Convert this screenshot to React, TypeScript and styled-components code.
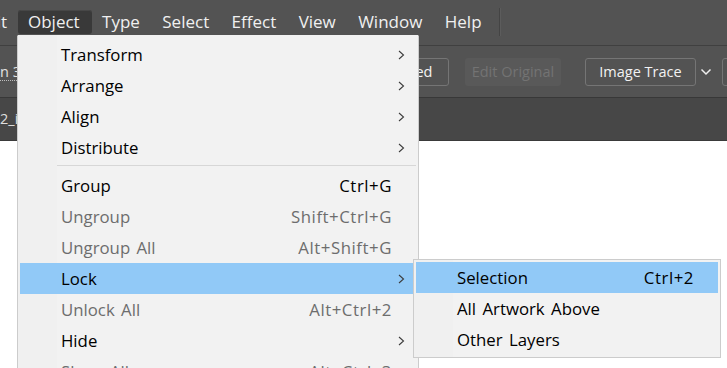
import styled, { createGlobalStyle } from "styled-components";

const GlobalStyle = createGlobalStyle`
  html, body {
    margin: 0;
    padding: 0;
    background: #ffffff;
  }
  body {
    font-family: "Open Sans", "Noto Sans", sans-serif;
  }
`;

// pantalla completa
const Screen = styled.div`
  position: relative;
  width: 727px;
  height: 368px;
  overflow: hidden;
  display: flex;
  flex-direction: column;
  background: #ffffff;
`;

const MenuBar = styled.div`
  height: 46px;
  box-sizing: border-box;
  padding-top: 10px;
  display: flex;
  align-items: flex-start;
  background: #535353;
  border-bottom: 1px solid #404040;
`;

type BarItemProps = {
  $active?: boolean;
  $clipped?: boolean;
};

const BarItem = styled.div<BarItemProps>`
  height: 24px;
  line-height: 23px;
  padding: 0 12.4px 0 10px;
  font-size: 17px;
  color: #f0f0f0;
  white-space: nowrap;
  border-radius: 3px;
  background: ${(props) => (props.$active ? "#393939" : "transparent")};
  box-shadow: ${(props) => (props.$active ? "inset 0 1px 0 #474747" : "none")};
  ${(props) =>
    props.$clipped &&
    `
    width: 18px;
    padding: 0 11px 0 0;
    display: flex;
    justify-content: flex-end;
    overflow: hidden;
    box-sizing: border-box;
  `}
`;

const BarDivider = styled.div`
  width: 1px;
  height: 28px;
  margin: -2px 0 0 5px;
  background: #444444;
  box-shadow: 1px 0 0 #5c5c5c;
`;

const Toolbar = styled.div`
  height: 52px;
  box-sizing: border-box;
  display: flex;
  align-items: center;
  background: #535353;
  border-bottom: 1px solid #383838;
  font-size: 14.5px;
`;

const DottedLabel = styled.span`
  color: #e2e2e2;
  white-space: nowrap;
  border-bottom: 1px dotted #bdbdbd;
  line-height: 17px;
`;

type ToolButtonProps = {
  $w: number;
  $gap: number;
  $disabled?: boolean;
};

const ToolButton = styled.div<ToolButtonProps>`
  flex: none;
  width: ${(props) => props.$w}px;
  height: 28px;
  margin-left: ${(props) => props.$gap}px;
  box-sizing: border-box;
  display: flex;
  align-items: center;
  justify-content: center;
  border-radius: 3px;
  white-space: nowrap;
  border: 1px solid ${(props) => (props.$disabled ? "transparent" : "#757575")};
  background: ${(props) => (props.$disabled ? "#595959" : "transparent")};
  color: ${(props) => (props.$disabled ? "#737373" : "#f2f2f2")};
`;

const Caret = styled.div`
  flex: none;
  width: 16px;
  margin-left: 2px;
  display: flex;
  justify-content: center;
`;

const TabBar = styled.div`
  height: 43px;
  box-sizing: border-box;
  display: flex;
  align-items: center;
  background: #474747;
  border-bottom: 1px solid #3a3a3a;
`;

const TabTitle = styled.span`
  color: #dedede;
  font-size: 14.5px;
  white-space: nowrap;
  padding-bottom: 2px;
`;

const Canvas = styled.div`
  flex: 1;
  background: #ffffff;
`;

type PopupProps = {
  $left: number;
  $top: number;
  $width: number;
  $open?: boolean;
};

// los menús desplegables van encima de todo
const Popup = styled.div<PopupProps>`
  position: absolute;
  left: ${(props) => props.$left}px;
  top: ${(props) => props.$top}px;
  width: ${(props) => props.$width}px;
  box-sizing: border-box;
  padding: ${(props) => (props.$open ? "3px 2px 2px" : "2px")};
  border: 1px solid #cccccc;
  border-top-color: ${(props) => (props.$open ? "transparent" : "#cccccc")};
  background: linear-gradient(to right, #f0f0f0 39px, #f2f2f2 39px);
  font-size: 16.8px;
  word-spacing: 2px;
`;

type RowProps = {
  $hover?: boolean;
  $disabled?: boolean;
};

const Row = styled.div<RowProps>`
  height: 31px;
  display: grid;
  grid-template-columns: 1fr auto 24px;
  align-items: center;
  padding-left: 41px;
  white-space: nowrap;
  background: ${(props) => (props.$hover ? "#91c9f7" : "transparent")};
  color: ${(props) => (props.$disabled ? "#6d6d6d" : "#000000")};
`;

const Shortcut = styled.span`
  text-align: right;
  letter-spacing: 0.55px;
`;

const Arrow = styled.span`
  display: flex;
  padding-left: 6px;
`;

const Separator = styled.div`
  height: 1px;
  margin: 2px 0 4px 37px;
  background: #d7d7d7;
`;

type Item = {
  label: string;
  keys?: string;
  sub?: boolean;
  off?: boolean;
  hover?: boolean;
};

const firstGroup: Item[] = [
  { label: "Transform", sub: true },
  { label: "Arrange", sub: true },
  { label: "Align", sub: true },
  { label: "Distribute", sub: true },
];

const secondGroup: Item[] = [
  { label: "Group", keys: "Ctrl+G" },
  { label: "Ungroup", keys: "Shift+Ctrl+G", off: true },
  { label: "Ungroup All", keys: "Alt+Shift+G", off: true },
  { label: "Lock", sub: true, hover: true },
  { label: "Unlock All", keys: "Alt+Ctrl+2", off: true },
  { label: "Hide", sub: true },
  { label: "Show All", keys: "Alt+Ctrl+3", off: true },
];

const lockItems: Item[] = [
  { label: "Selection", keys: "Ctrl+2", hover: true },
  { label: "All Artwork Above" },
  { label: "Other Layers" },
];

function Chevron() {
  return (
    <svg width="7" height="10" viewBox="0 0 7 10">
      <polyline points="1,1 5.5,5 1,9" fill="none" stroke="#3c3c3c" strokeWidth="1.1" />
    </svg>
  );
}

function MenuRow({ item }: { item: Item }) {
  return (
    <Row $hover={item.hover} $disabled={item.off}>
      <span>{item.label}</span>
      <Shortcut>{item.keys}</Shortcut>
      <Arrow>{item.sub && <Chevron />}</Arrow>
    </Row>
  );
}

function App() {
  const barItems = ["Object", "Type", "Select", "Effect", "View", "Window", "Help"];

  return (
    <>
      <GlobalStyle />
      <Screen>
        <MenuBar>
          <BarItem $clipped>Edit</BarItem>
          {barItems.map((name) => (
            <BarItem key={name} $active={name === "Object"}>
              {name}
            </BarItem>
          ))}
          <BarDivider />
        </MenuBar>

        <Toolbar>
          <DottedLabel>n 3</DottedLabel>
          <ToolButton $w={100} $gap={328}>Unembed</ToolButton>
          <ToolButton $w={96} $gap={16} $disabled>
            Edit Original
          </ToolButton>
          <ToolButton $w={111} $gap={24}>Image Trace</ToolButton>
          <Caret>
            <svg width="12" height="8" viewBox="0 0 12 8">
              <polyline points="1.5,1.5 6,6 10.5,1.5" fill="none" stroke="#eeeeee" strokeWidth="1.5" />
            </svg>
          </Caret>
          <ToolButton $w={60} $gap={8}>Mask</ToolButton>
        </Toolbar>

        <TabBar>
          <TabTitle>2_icon.ai</TabTitle>
        </TabBar>

        <Canvas />

        <Popup $left={17} $top={35} $width={402} $open>
          {firstGroup.map((item) => (
            <MenuRow key={item.label} item={item} />
          ))}
          <Separator />
          {secondGroup.map((item) => (
            <MenuRow key={item.label} item={item} />
          ))}
        </Popup>

        <Popup $left={413} $top={259} $width={308}>
          {lockItems.map((item) => (
            <MenuRow key={item.label} item={item} />
          ))}
        </Popup>
      </Screen>
    </>
  );
}

export default App;
